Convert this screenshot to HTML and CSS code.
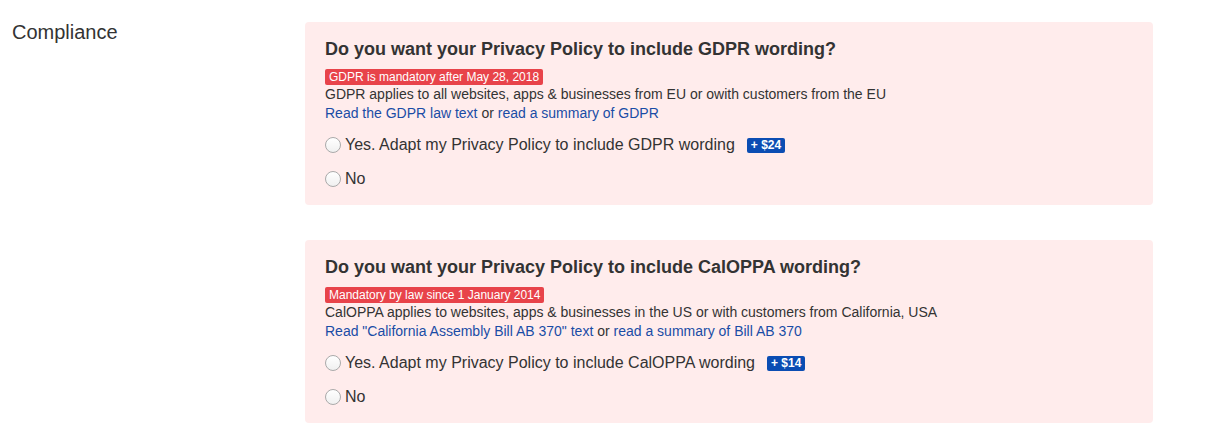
FILE: index.html
```html
<!DOCTYPE html>
<html lang="en">
<head>
    <meta charset="UTF-8">
    <meta name="viewport" content="width=device-width, initial-scale=1.0">
    <title>Compliance</title>
    <link rel="stylesheet" href="styles.css">
</head>
<body>
    <div class="form-row">
        <div class="row-label">Compliance</div>
        <div class="row-fields">
            <div class="compliance-box">
                <div class="box-title">Do you want your Privacy Policy to include GDPR wording?</div>
                <span class="badge-red">GDPR is mandatory after May 28, 2018</span>
                <div class="box-text">GDPR applies to all websites, apps &amp; businesses from EU or owith customers from the EU</div>
                <div class="box-text"><a href="#">Read the GDPR law text</a> or <a href="#">read a summary of GDPR</a></div>
                <div class="options">
                    <label class="option">
                        <input type="radio" name="gdpr"> Yes. Adapt my Privacy Policy to include GDPR wording
                        <span class="price">+ $24</span>
                    </label>
                    <label class="option">
                        <input type="radio" name="gdpr"> No
                    </label>
                </div>
            </div>
            <div class="compliance-box">
                <div class="box-title">Do you want your Privacy Policy to include CalOPPA wording?</div>
                <span class="badge-red">Mandatory by law since 1 January 2014</span>
                <div class="box-text">CalOPPA applies to websites, apps &amp; businesses in the US or with customers from California, USA</div>
                <div class="box-text"><a href="#">Read "California Assembly Bill AB 370" text</a> or <a href="#">read a summary of Bill AB 370</a></div>
                <div class="options">
                    <label class="option">
                        <input type="radio" name="caloppa"> Yes. Adapt my Privacy Policy to include CalOPPA wording
                        <span class="price">+ $14</span>
                    </label>
                    <label class="option">
                        <input type="radio" name="caloppa"> No
                    </label>
                </div>
            </div>
        </div>
    </div>
</body>
</html>
```

FILE: styles.css
```css
body, html {
    margin: 0;
    background-color: #fff;
    color: #333;
    font-family: 'Liberation Sans', Arial, sans-serif;
}
.form-row {
    display: flex;
    padding: 22px 53px 0 12px;
}
.row-label {
    width: 293px;
    font-size: 20px;
    line-height: 20px;
}
.row-fields {
    flex: 1;
    display: flex;
    flex-direction: column;
    gap: 35px;
}
.compliance-box {
    background-color: #ffecec;
    border-radius: 4px;
    padding: 17px 20px 17px 20px;
    height: 183px;
    box-sizing: border-box;
}
.box-title {
    font-size: 18px;
    font-weight: bold;
    line-height: 20px;
    margin-bottom: 8px;
}
.badge-red {
    display: inline-block;
    background-color: #e8434a;
    color: #fff;
    font-size: 12px;
    line-height: 16px;
    padding: 0 4px;
    border-radius: 2px;
}
.box-text {
    font-size: 14px;
    line-height: 19px;
}
.box-text a {
    color: #1a4ca6;
    text-decoration: none;
}
.options {
    margin-top: 5px;
}
.option {
    display: flex;
    align-items: center;
    height: 34px;
    font-size: 16px;
}
.option input[type="radio"] {
    appearance: none;
    -webkit-appearance: none;
    width: 16px;
    height: 16px;
    margin: 0 4px 0 0;
    border: 1px solid #aaa;
    border-radius: 50%;
    background: linear-gradient(#fff, #f0f0f0);
    box-sizing: border-box;
}
.price {
    display: inline-block;
    margin-left: 12px;
    background-color: #0b4db3;
    color: #fff;
    font-size: 12px;
    font-weight: bold;
    line-height: 15px;
    padding: 0 4px;
    border-radius: 2px;
}
```
